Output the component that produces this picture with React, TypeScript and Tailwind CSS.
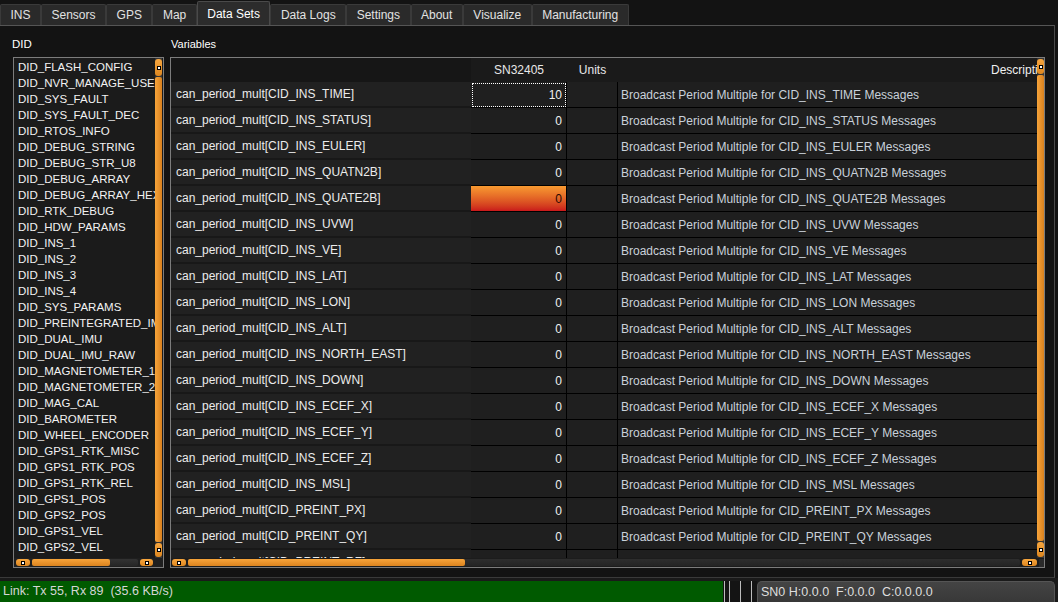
const tabs = ["INS", "Sensors", "GPS", "Map", "Data Sets", "Data Logs", "Settings", "About", "Visualize", "Manufacturing"];

const dids = [
  "FLASH_CONFIG", "NVR_MANAGE_USERPAGE", "SYS_FAULT", "SYS_FAULT_DEC", "RTOS_INFO",
  "DEBUG_STRING", "DEBUG_STR_U8", "DEBUG_ARRAY", "DEBUG_ARRAY_HEX", "RTK_DEBUG",
  "HDW_PARAMS", "INS_1", "INS_2", "INS_3", "INS_4", "SYS_PARAMS", "PREINTEGRATED_IMU",
  "DUAL_IMU", "DUAL_IMU_RAW", "MAGNETOMETER_1", "MAGNETOMETER_2", "MAG_CAL", "BAROMETER",
  "WHEEL_ENCODER", "GPS1_RTK_MISC", "GPS1_RTK_POS", "GPS1_RTK_REL", "GPS1_POS", "GPS2_POS",
  "GPS1_VEL", "GPS2_VEL",
];

const cids = [
  "INS_TIME", "INS_STATUS", "INS_EULER", "INS_QUATN2B", "INS_QUATE2B", "INS_UVW", "INS_VE",
  "INS_LAT", "INS_LON", "INS_ALT", "INS_NORTH_EAST", "INS_DOWN", "INS_ECEF_X", "INS_ECEF_Y",
  "INS_ECEF_Z", "INS_MSL", "PREINT_PX", "PREINT_QY", "PREINT_RZ",
];

function Knob({ className }: { className: string }) {
  return (
    <div className={`flex shrink-0 items-center justify-center rounded-[3px] bg-gradient-to-b from-[#f7a63e] to-[#de871f] ${className}`}>
      <span className="h-[4px] w-[4px] border border-black bg-white" />
    </div>
  );
}

function VScroll({ topH, botH }: { topH: string; botH: string }) {
  return (
    <div className="flex w-[7px] shrink-0 flex-col gap-[1px] bg-gradient-to-r from-[#2c2c2c] to-[#3a3a3a] py-[1px]">
      <Knob className={topH} />
      <div className="flex-1 rounded-[2px] bg-gradient-to-r from-[#f7a43a] to-[#d9811d]" />
      <Knob className={botH} />
    </div>
  );
}

function App() {
  return (
    <div className="flex h-[602px] w-[1058px] flex-col overflow-hidden bg-[#131313] font-['Liberation_Sans',Arial,sans-serif] text-[#e6e6e6]">
      {/* tab strip */}
      <div className="flex h-[25px] shrink-0 items-end">
        {tabs.map((t) => (
          <div
            key={t}
            className={`flex items-center rounded-t-[2px] border border-b-0 px-[9.5px] text-[12px] leading-none ${
              t === "Data Sets"
                ? "h-[24px] border-[#4a4a4a] bg-[#2c2c2c] text-white"
                : "h-[21px] border-[#3a3a3a] bg-[#2a2a2a] text-[#e2e2e2]"
            }`}
          >
            {t}
          </div>
        ))}
      </div>

      {/* page */}
      <div className="mr-[3px] flex h-[553px] shrink-0 gap-[6px] border-y border-r border-t-[#555] border-b-[#3a3a3a] border-r-[#4a4a4a] pl-[13px] pt-[11px]">
        <div className="flex w-[151px] flex-col">
          <div className="mb-[6px] ml-[-1px] h-[14px] text-[11.5px] leading-[14px] text-white">DID</div>
          <div className="flex h-[511px] flex-col border border-[#7c7c7c] bg-[#1b1b1b]">
            <div className="flex min-h-0 flex-1">
              <div className="min-w-0 flex-1 overflow-hidden pl-[4px] pt-[1px]">
                {dids.map((d) => (
                  <div key={d} className="h-[16px] whitespace-nowrap text-[11.5px] leading-[16px] text-[#f2f2f2]">
                    DID_{d}
                  </div>
                ))}
              </div>
              <div className="mr-[1px] flex">
                <VScroll topH="h-[17px]" botH="h-[14px]" />
              </div>
            </div>
            <div className="flex h-[9px] shrink-0 items-start gap-[2px] bg-[#1f1f1f] pl-[2px] pt-[1px]">
              <Knob className="h-[7px] w-[14px]" />
              <div className="flex h-[7px] w-[106px] rounded-[2px] bg-gradient-to-b from-[#333] to-[#262626]">
                <div className="h-[7px] w-[78px] rounded-[2px] bg-gradient-to-b from-[#f7a43a] to-[#dc841e]" />
              </div>
              <Knob className="h-[7px] w-[13px]" />
            </div>
          </div>
        </div>

        <div className="flex w-[875px] flex-col">
          <div className="mb-[6px] ml-[1px] h-[14px] text-[11px] leading-[14px] text-white">Variables</div>
          <div className="flex h-[511px] flex-col border border-[#7c7c7c] bg-[#1a1a1a]">
            <div className="flex min-h-0 flex-1">
              <div className="min-w-0 flex-1 overflow-hidden text-[12px]">
                {/* header */}
                <div className="flex h-[24px] items-center">
                  <div className="h-full w-[300px] shrink-0 bg-[#161616]" />
                  <div className="w-[96px] shrink-0 text-center text-[#e8e8e8]">SN32405</div>
                  <div className="w-[51px] shrink-0 text-center text-[#e8e8e8]">Units</div>
                  <div className="flex min-w-0 flex-1 justify-end overflow-hidden">
                    <span className="mr-[-14px] whitespace-nowrap text-[#f0f0f0]">Description</span>
                  </div>
                </div>
                {cids.map((c, i) => (
                  <div key={c} className="flex h-[26px]">
                    <div className="flex w-[300px] shrink-0 items-center border-b-2 border-[#181818] bg-[#212121] pl-[5px] whitespace-nowrap text-[#ececec]">
                      can_period_mult[CID_{c}]
                    </div>
                    <div
                      className={`flex w-[96px] shrink-0 items-center justify-end border-r border-b border-black pr-[4px] ${
                        i === 4
                          ? "bg-gradient-to-b from-[#f89a31] to-[#c9161b] text-[#2a0800]"
                          : "bg-[#1f1f1f] text-[#f0f0f0]"
                      } ${i === 0 ? "outline-1 -outline-offset-2 outline-white outline-dotted" : ""}`}
                    >
                      {i === 0 ? "10" : "0"}
                    </div>
                    <div className="w-[51px] shrink-0 border-r border-b border-black bg-[#1f1f1f]" />
                    <div className="flex min-w-0 flex-1 items-center border-b border-black bg-[#1f1f1f] pl-[3px] whitespace-nowrap text-[#c9d1da]">
                      Broadcast Period Multiple for CID_{c} Messages
                    </div>
                  </div>
                ))}
              </div>
              <VScroll topH="h-[15px]" botH="h-[15px]" />
            </div>
            <div className="flex h-[9px] shrink-0 items-start gap-[2px] bg-[#1c1c1c] pl-[1px] pt-[1px]">
              <Knob className="h-[7px] w-[14px]" />
              <div className="flex h-[7px] w-[832px] rounded-[2px] bg-gradient-to-b from-[#2e2e2e] to-[#242424]">
                <div className="h-[7px] w-[277px] rounded-[2px] bg-gradient-to-b from-[#f7a43a] to-[#dc841e]" />
              </div>
              <Knob className="h-[7px] w-[15px]" />
              <div className="h-[8px] flex-1 bg-[#2a2a2a]" />
            </div>
          </div>
        </div>
      </div>

      {/* status bar */}
      <div className="flex flex-1 items-end bg-[#1a1a1a]">
        <div className="flex h-[21px] w-full">
          <div className="flex w-[723px] shrink-0 items-center bg-[#005a00] pl-[3px] text-[12.5px] whitespace-pre text-[#d6d6d6]">
            Link: Tx 55, Rx 89  (35.6 KB/s)
          </div>
          <div className="flex w-[34px] shrink-0 bg-[#141414]">
            <div className="ml-[1px] w-[1px] bg-[#bdbdbd]" />
            <div className="ml-[4px] w-[1px] bg-[#bdbdbd]" />
            <div className="ml-[10px] w-[1px] bg-[#bdbdbd]" />
            <div className="ml-[10px] w-[1px] bg-[#bdbdbd]" />
          </div>
          <div className="flex w-[298px] shrink-0 items-center rounded-t-[5px] border border-b-0 border-[#555] bg-gradient-to-b from-[#444] to-[#383838] pl-[3px] text-[12.5px] whitespace-pre text-[#dedede]">
            SN0 H:0.0.0  F:0.0.0  C:0.0.0.0
          </div>
        </div>
      </div>
    </div>
  );
}

export default App;
